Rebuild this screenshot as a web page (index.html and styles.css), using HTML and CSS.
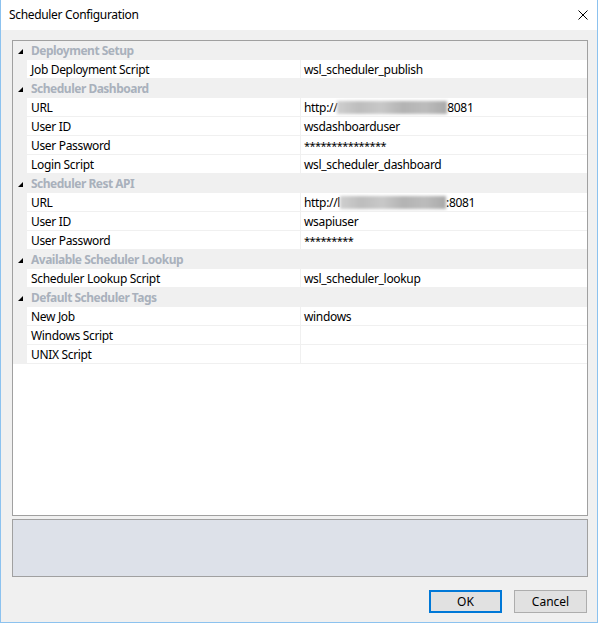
FILE: index.html
```html
<!DOCTYPE html>
<html>
<head>
<meta charset="utf-8">
<link rel="stylesheet" href="styles.css">
</head>
<body>
<div class="window">
  <div class="titlebar">
    <span class="title">Scheduler Configuration</span>
    <svg class="close" width="10" height="10" viewBox="0 0 10 10"><path d="M0.5 0.5 L9.5 9.5 M9.5 0.5 L0.5 9.5" stroke="#000" stroke-width="1" fill="none"/></svg>
  </div>
  <div class="content">
    <div class="grid">
      <div class="cat"><span class="tri"><svg width="5" height="5" viewBox="0 0 5 5"><polygon points="0,5 5,5 5,0" fill="#000"/></svg></span><span class="cat-label">Deployment Setup</span></div>
      <div class="row"><span class="gutter"></span><span class="name">Job Deployment Script</span><span class="val">wsl_scheduler_publish</span></div>

      <div class="cat"><span class="tri"><svg width="5" height="5" viewBox="0 0 5 5"><polygon points="0,5 5,5 5,0" fill="#000"/></svg></span><span class="cat-label">Scheduler Dashboard</span></div>
      <div class="row"><span class="gutter"></span><span class="name">URL</span><span class="val">http://<span class="blur b1"></span>8081</span></div>
      <div class="row"><span class="gutter"></span><span class="name">User ID</span><span class="val">wsdashboarduser</span></div>
      <div class="row"><span class="gutter"></span><span class="name">User Password</span><span class="val pw">***************</span></div>
      <div class="row"><span class="gutter"></span><span class="name">Login Script</span><span class="val">wsl_scheduler_dashboard</span></div>

      <div class="cat"><span class="tri"><svg width="5" height="5" viewBox="0 0 5 5"><polygon points="0,5 5,5 5,0" fill="#000"/></svg></span><span class="cat-label">Scheduler Rest API</span></div>
      <div class="row"><span class="gutter"></span><span class="name">URL</span><span class="val">http://l<span class="blur b2"></span>:8081</span></div>
      <div class="row"><span class="gutter"></span><span class="name">User ID</span><span class="val">wsapiuser</span></div>
      <div class="row"><span class="gutter"></span><span class="name">User Password</span><span class="val pw">*********</span></div>

      <div class="cat"><span class="tri"><svg width="5" height="5" viewBox="0 0 5 5"><polygon points="0,5 5,5 5,0" fill="#000"/></svg></span><span class="cat-label">Available Scheduler Lookup</span></div>
      <div class="row"><span class="gutter"></span><span class="name">Scheduler Lookup Script</span><span class="val">wsl_scheduler_lookup</span></div>

      <div class="cat"><span class="tri"><svg width="5" height="5" viewBox="0 0 5 5"><polygon points="0,5 5,5 5,0" fill="#000"/></svg></span><span class="cat-label">Default Scheduler Tags</span></div>
      <div class="row"><span class="gutter"></span><span class="name">New Job</span><span class="val">windows</span></div>
      <div class="row"><span class="gutter"></span><span class="name">Windows Script</span><span class="val"></span></div>
      <div class="row"><span class="gutter"></span><span class="name">UNIX Script</span><span class="val"></span></div>
    </div>
    <div class="info"></div>
    <div class="buttons">
      <button class="btn ok">OK</button>
      <button class="btn">Cancel</button>
    </div>
  </div>
</div>
</body>
</html>
```

FILE: styles.css
```css
html, body {
  margin: 0;
  padding: 0;
}
body {
  font-family: "Noto Sans", "Open Sans", sans-serif;
  font-size: 12px;
  letter-spacing: -0.33px;
  color: #000;
  background: #f0f0f0;
}
.window {
  width: 598px;
  height: 623px;
  box-sizing: border-box;
  border: 1px solid #8cc2ef;
  border-top: none;
  background: #f0f0f0;
  display: flex;
  flex-direction: column;
}
.titlebar {
  height: 30px;
  background: #fff;
  display: flex;
  align-items: center;
  justify-content: space-between;
  padding: 0 9px 0 8px;
  flex: none;
}
.title {
  font-size: 12px;
  line-height: 16px;
}
.close {
  display: block;
  margin-top: -1px;
}
.content {
  flex: 1;
  display: flex;
  flex-direction: column;
  padding: 10px 9px 0 11px;
}
.grid {
  height: 476px;
  box-sizing: border-box;
  border: 1px solid #a0a0a0;
  background: #fff;
  flex: none;
}
.cat {
  height: 19px;
  background: #f0f0f0;
  display: flex;
  align-items: center;
}
.tri {
  width: 14px;
  flex: none;
  display: flex;
  justify-content: flex-end;
  padding-right: 4px;
  box-sizing: border-box;
  margin-top: 1px;
}
.tri svg { display: block; }
.cat-label {
  font-weight: bold;
  color: #a9b1bc;
  padding-left: 4px;
  line-height: 19px;
  letter-spacing: -0.5px;
}
.row {
  height: 19px;
  display: flex;
  box-sizing: border-box;
}
.gutter {
  width: 14px;
  flex: none;
  background: #f0f0f0;
}
.name {
  width: 274px;
  flex: none;
  box-sizing: border-box;
  padding-left: 4px;
  line-height: 20px;
  border-bottom: 1px solid #f0f0f0;
  border-right: 1px solid #f0f0f0;
  white-space: nowrap;
  overflow: hidden;
}
.val {
  flex: 1;
  padding-left: 3px;
  line-height: 20px;
  border-bottom: 1px solid #f0f0f0;
  white-space: nowrap;
  overflow: hidden;
}
.pw {
  font-size: 11px;
  letter-spacing: -0.6px;
}
.blur {
  display: inline-block;
  height: 13px;
  vertical-align: -2px;
  filter: blur(1.5px);
  background: linear-gradient(90deg, #cfcfcf 0%, #bdbdbd 20%, #c8c8c8 40%, #b3b3b3 60%, #bcbcbc 80%, #a9a9a9 100%);
}
.b1 { width: 110px; }
.b2 { width: 106px; }
.info {
  height: 58px;
  margin-top: 3px;
  box-sizing: border-box;
  border: 1px solid #a0a0a0;
  background: #dde1e9;
  flex: none;
}
.buttons {
  display: flex;
  justify-content: flex-end;
  gap: 12px;
  margin-top: 13px;
  padding-right: 1px;
}
.btn {
  width: 73px;
  height: 23px;
  box-sizing: border-box;
  border: 1px solid #adadad;
  background: #e1e1e1;
  font-family: "Noto Sans", "Open Sans", sans-serif;
  font-size: 12px;
  color: #000;
  padding: 0;
  margin: 0;
}
.btn.ok {
  border: 2px solid #0078d7;
}
```
